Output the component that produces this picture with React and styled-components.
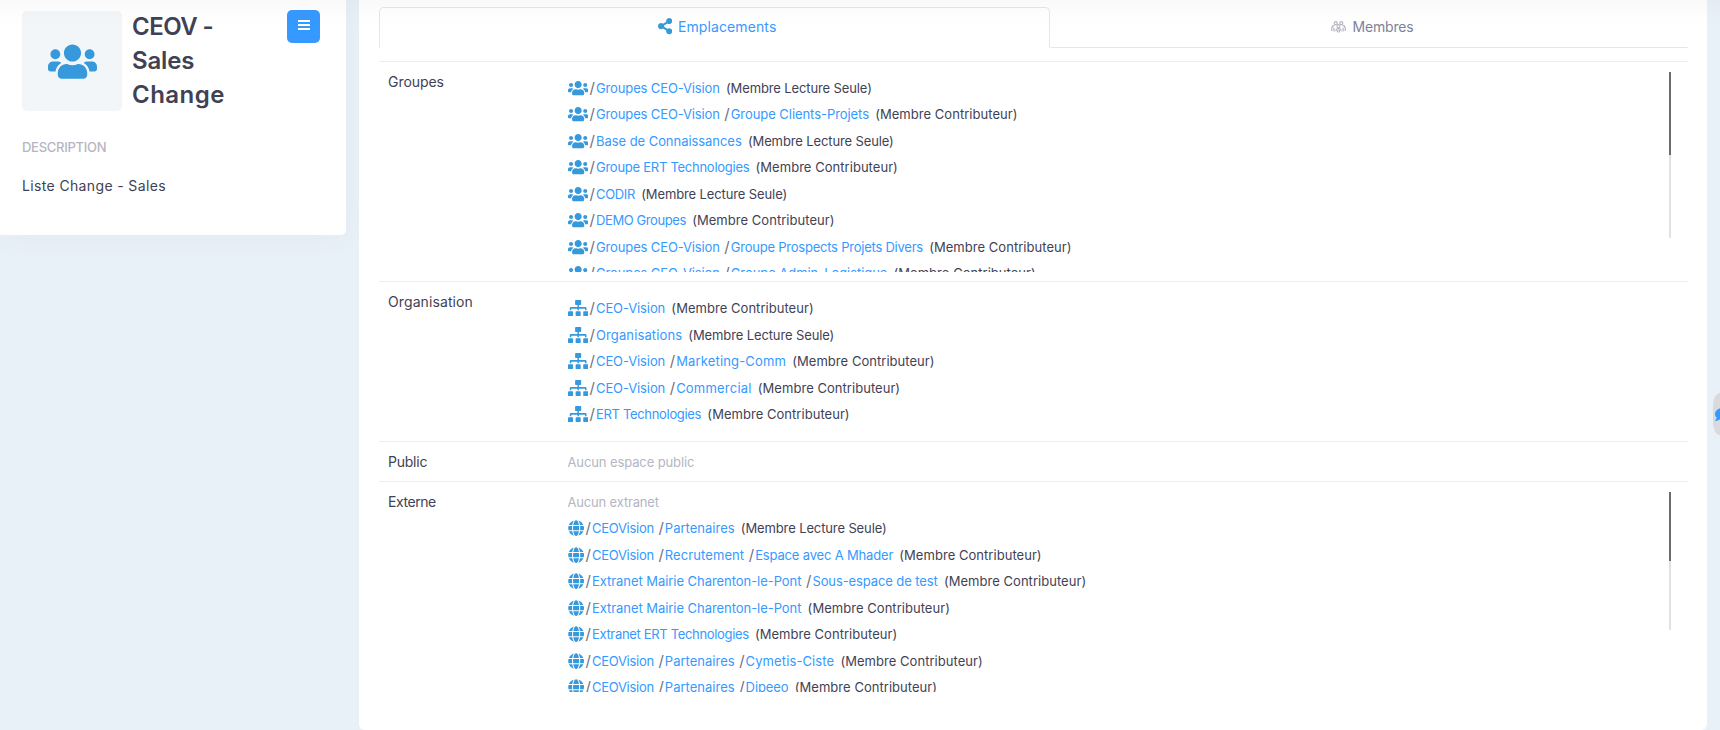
import React from "react";
import styled, { createGlobalStyle } from "styled-components";
import { FaUsers, FaSitemap, FaGlobe, FaShareAlt, FaComment } from "react-icons/fa";

const Global = createGlobalStyle`
  * { box-sizing: border-box; }
  body {
    margin: 0;
    background: #e9f1f8;
    font-family: Inter, "Open Sans", sans-serif;
    font-size: 13px;
    color: #3f4254;
    overflow: hidden;
  }
`;

const Page = styled.div`
  display: flex;
  align-items: flex-start;
  gap: 13px;
  height: 730px;
  width: 1720px;
  overflow: hidden;
`;

const TopShade = styled.div`
  position: absolute;
  inset: 0 0 auto 0;
  height: 28px;
  background: linear-gradient(rgba(0, 0, 0, 0.024), rgba(0, 0, 0, 0.008) 50%, rgba(0, 0, 0, 0));
  pointer-events: none;
`;

const SideCard = styled.aside`
  width: 346px;
  height: 235px;
  padding: 11px 26px 0 22px;
  background: #fff;
  border-radius: 0 0 5px 0;
  box-shadow: 0 0 30px rgba(82, 63, 105, 0.05);
`;

const Identity = styled.div`
  display: flex;
  align-items: flex-start;
`;

const Avatar = styled.div`
  display: flex;
  align-items: center;
  justify-content: center;
  width: 100px;
  height: 100px;
  margin-right: 10px;
  padding: 1px 0 0 1px;
  border-radius: 5px;
  background: #f3f6f9;
  color: #3699db;
  svg { width: 49px; height: 39.2px; }
`;

const Title = styled.h1`
  flex: 1;
  margin: -1px 0 0;
  font-size: 24px;
  font-weight: 600;
  line-height: 34px;
`;

const TitleLine = styled.span`
  display: block;
  letter-spacing: ${(p) => p.$track}px;
`;

const MenuButton = styled.button`
  display: flex;
  align-items: flex-start;
  justify-content: center;
  width: 33px;
  height: 33px;
  margin: -1px 0 0;
  padding: 10px 0 0 1px;
  border: 0;
  border-radius: 5px;
  background: #3699ff;
  svg { width: 12px; height: 10px; }
`;

const SectionTitle = styled.h2`
  margin: 25px 0 0;
  font-size: 13px;
  font-weight: 500;
  line-height: 20px;
  letter-spacing: -0.28px;
  color: #b5b5c3;
`;

const Description = styled.p`
  margin: 19px 0 0;
  font-size: 14px;
  line-height: 20px;
  letter-spacing: 0.36px;
`;

const MainCard = styled.main`
  width: 1348px;
  height: 730px;
  padding: 7px 19px 0 20px;
  background: #fff;
  border-radius: 0 0 6px 6px;
`;

const Tabs = styled.nav`
  display: flex;
  height: 41px;
  margin-bottom: 13px;
`;

const Tab = styled.div`
  display: flex;
  align-items: center;
  justify-content: center;
  gap: 6px;
  width: ${(p) => (p.$active ? 671 : 638)}px;
  padding: 0 0 2px ${(p) => (p.$active ? 5 : 7)}px;
  border: 1px solid ${(p) => (p.$active ? "#e4e6ef" : "transparent")};
  border-bottom-color: ${(p) => (p.$active ? "transparent" : "#e4e6ef")};
  border-radius: ${(p) => (p.$active ? "5px 5px 0 0" : "0")};
  font-size: 14px;
  letter-spacing: ${(p) => p.$track}px;
  color: ${(p) => (p.$active ? "#3699ff" : "#7e8299")};
`;

const ShareIcon = styled(FaShareAlt)`
  width: 14.3px;
  height: 16.3px;
  color: #3699db;
`;

const Section = styled.section`
  display: flex;
  height: ${(p) => p.$height}px;
  padding: 10px 10px 9px 9px;
  border-top: 1px solid #ebedf3;
`;

const Label = styled.div`
  width: 179.5px;
  font-size: 14px;
  line-height: 19px;
  letter-spacing: ${(p) => p.$track}px;
`;

const Content = styled.div`
  flex: 1;
  height: ${(p) => (p.$scroll ? "200px" : "auto")};
  padding-top: ${(p) => p.$top || 0}px;
  overflow: hidden;
`;

const Empty = styled.div`
  height: ${(p) => (p.$short ? 20 : 23)}px;
  line-height: 20px;
  letter-spacing: ${(p) => p.$track}px;
  color: #b5b5c3;
`;

const Item = styled.div`
  display: flex;
  align-items: center;
  height: 26.5px;
  white-space: nowrap;
`;

const ItemIcon = styled.span`
  display: flex;
  width: ${(p) => p.$width + 1.8}px;
  color: #3699db;
  svg { width: ${(p) => p.$width}px; height: 16.25px; }
`;

const Slash = styled.span`
  width: 6.4px;
  font-size: 15px;
  line-height: 18px;
  color: #6f7080;
`;

const Link = styled.a`
  margin-right: ${(p) => (p.$last ? 6.2 : 4.6)}px;
  letter-spacing: ${(p) => p.$track}px;
  color: #3699ff;
`;

const Role = styled.span`
  letter-spacing: ${(p) => p.$track}px;
`;

const ScrollTrack = styled.div`
  width: 2px;
  height: ${(p) => p.$height}px;
  margin: 0 7px 0 0;
  background: #e1e1e1;
`;

const ScrollThumb = styled.div`
  width: 2px;
  height: 50%;
  background: #6c6c6c;
`;

const ChatButton = styled.div`
  position: absolute;
  top: 393px;
  right: 0;
  display: flex;
  align-items: center;
  width: 7px;
  height: 42px;
  padding-left: 2px;
  overflow: hidden;
  border-radius: 7px 0 0 7px / 13px 0 0 13px;
  background: #d9dade;
  color: #3699ff;
  svg { flex: none; width: 15px; height: 15px; }
`;

const TRACKING = {
  "Groupes CEO-Vision": -0.13,
  "Groupe Clients-Projets": -0.06,
  "Base de Connaissances": -0.05,
  "Groupe ERT Technologies": -0.26,
  CODIR: -0.32,
  "DEMO Groupes": -0.4,
  "Groupe Prospects Projets Divers": -0.23,
  "Groupe Admin-Logistique": -0.06,
  "CEO-Vision": -0.1,
  Organisations: 0.12,
  "Marketing-Comm": 0.16,
  Commercial: 0.21,
  "ERT Technologies": -0.32,
  CEOVision: -0.28,
  Partenaires: 0.01,
  Recrutement: 0.09,
  "Espace avec A Mhader": -0.17,
  "Extranet Mairie Charenton-le-Pont": -0.05,
  "Sous-espace de test": -0.1,
  "Extranet ERT Technologies": -0.33,
  "Cymetis-Ciste": 0.11,
  Dipeeo: -0.08,
};

const READ = { text: "(Membre Lecture Seule)", track: -0.12 };
const WRITE = { text: "(Membre Contributeur)", track: 0.04 };

const groups = [
  [["Groupes CEO-Vision"], READ],
  [["Groupes CEO-Vision", "Groupe Clients-Projets"], WRITE],
  [["Base de Connaissances"], READ],
  [["Groupe ERT Technologies"], WRITE],
  [["CODIR"], READ],
  [["DEMO Groupes"], WRITE],
  [["Groupes CEO-Vision", "Groupe Prospects Projets Divers"], WRITE],
  [["Groupes CEO-Vision", "Groupe Admin-Logistique"], WRITE],
];

const organisations = [
  [["CEO-Vision"], WRITE],
  [["Organisations"], READ],
  [["CEO-Vision", "Marketing-Comm"], WRITE],
  [["CEO-Vision", "Commercial"], WRITE],
  [["ERT Technologies"], WRITE],
];

const extranets = [
  [["CEOVision", "Partenaires"], READ],
  [["CEOVision", "Recrutement", "Espace avec A Mhader"], WRITE],
  [["Extranet Mairie Charenton-le-Pont", "Sous-espace de test"], WRITE],
  [["Extranet Mairie Charenton-le-Pont"], WRITE],
  [["Extranet ERT Technologies"], WRITE],
  [["CEOVision", "Partenaires", "Cymetis-Ciste"], WRITE],
  [["CEOVision", "Partenaires", "Dipeeo"], WRITE],
];

function PathList({ items, icon: Icon, iconWidth }) {
  return items.map(([path, role], i) => (
    <Item key={i}>
      <ItemIcon $width={iconWidth}><Icon /></ItemIcon>
      {path.map((name, j) => (
        <React.Fragment key={name}>
          <Slash>/</Slash>
          <Link $track={TRACKING[name]} $last={j === path.length - 1}>{name}</Link>
        </React.Fragment>
      ))}
      <Role $track={role.track}>{role.text}</Role>
    </Item>
  ));
}

function Scrollbar({ height }) {
  return <ScrollTrack $height={height}><ScrollThumb /></ScrollTrack>;
}

function MembersIcon() {
  return (
    <svg width="15" height="12" viewBox="0 0 15 12" fill="none" stroke="#b5b5c3" strokeWidth="1.2">
      <circle cx="4.7" cy="2.2" r="1.5" />
      <circle cx="10.3" cy="2.2" r="1.5" />
      <circle cx="7.5" cy="5.2" r="1.5" />
      <path d="M.8 10V7.2Q1 4.6 3.6 4.2M14.2 10V7.2Q14 4.6 11.4 4.2M2.9 10.4V6.6M12.1 10.4V6.6M4.9 10.2Q4.8 7.6 7.5 7.6Q10.2 7.6 10.1 10.2M6.6 11.6V9M8.4 11.6V9" />
    </svg>
  );
}

export default function App() {
  return (
    <Page>
      <Global />
      <SideCard>
        <Identity>
          <Avatar><FaUsers /></Avatar>
          <Title>
            <TitleLine $track={-0.54}>CEOV -</TitleLine>
            <TitleLine $track={-0.17}>Sales</TitleLine>
            <TitleLine $track={0.48}>Change</TitleLine>
          </Title>
          <MenuButton aria-label="Menu">
            <svg viewBox="0 0 12 10" fill="#fff">
              <rect width="12" height="2" />
              <rect y="4" width="12" height="2" />
              <rect y="8" width="12" height="2" />
            </svg>
          </MenuButton>
        </Identity>
        <SectionTitle>DESCRIPTION</SectionTitle>
        <Description>Liste Change - Sales</Description>
      </SideCard>

      <MainCard>
        <Tabs>
          <Tab $active $track={0.11}><ShareIcon />Emplacements</Tab>
          <Tab $track={-0.15}><MembersIcon />Membres</Tab>
        </Tabs>

        <Section $height={220}>
          <Label $track={-0.05}>Groupes</Label>
          <Content $scroll $top={2.5}>
            <PathList items={groups} icon={FaUsers} iconWidth={20.3} />
          </Content>
          <Scrollbar height={166} />
        </Section>

        <Section $height={160}>
          <Label $track={0.1}>Organisation</Label>
          <Content $top={3}>
            <PathList items={organisations} icon={FaSitemap} iconWidth={20.3} />
          </Content>
        </Section>

        <Section $height={40}>
          <Label $track={-0.23}>Public</Label>
          <Content><Empty $short $track={-0.11}>Aucun espace public</Empty></Content>
        </Section>

        <Section $height={220}>
          <Label $track={-0.44}>Externe</Label>
          <Content $scroll>
            <Empty $track={-0.17}>Aucun extranet</Empty>
            <PathList items={extranets} icon={FaGlobe} iconWidth={16.25} />
          </Content>
          <Scrollbar height={138} />
        </Section>
      </MainCard>
      <TopShade />
      <ChatButton><FaComment /></ChatButton>
    </Page>
  );
}
